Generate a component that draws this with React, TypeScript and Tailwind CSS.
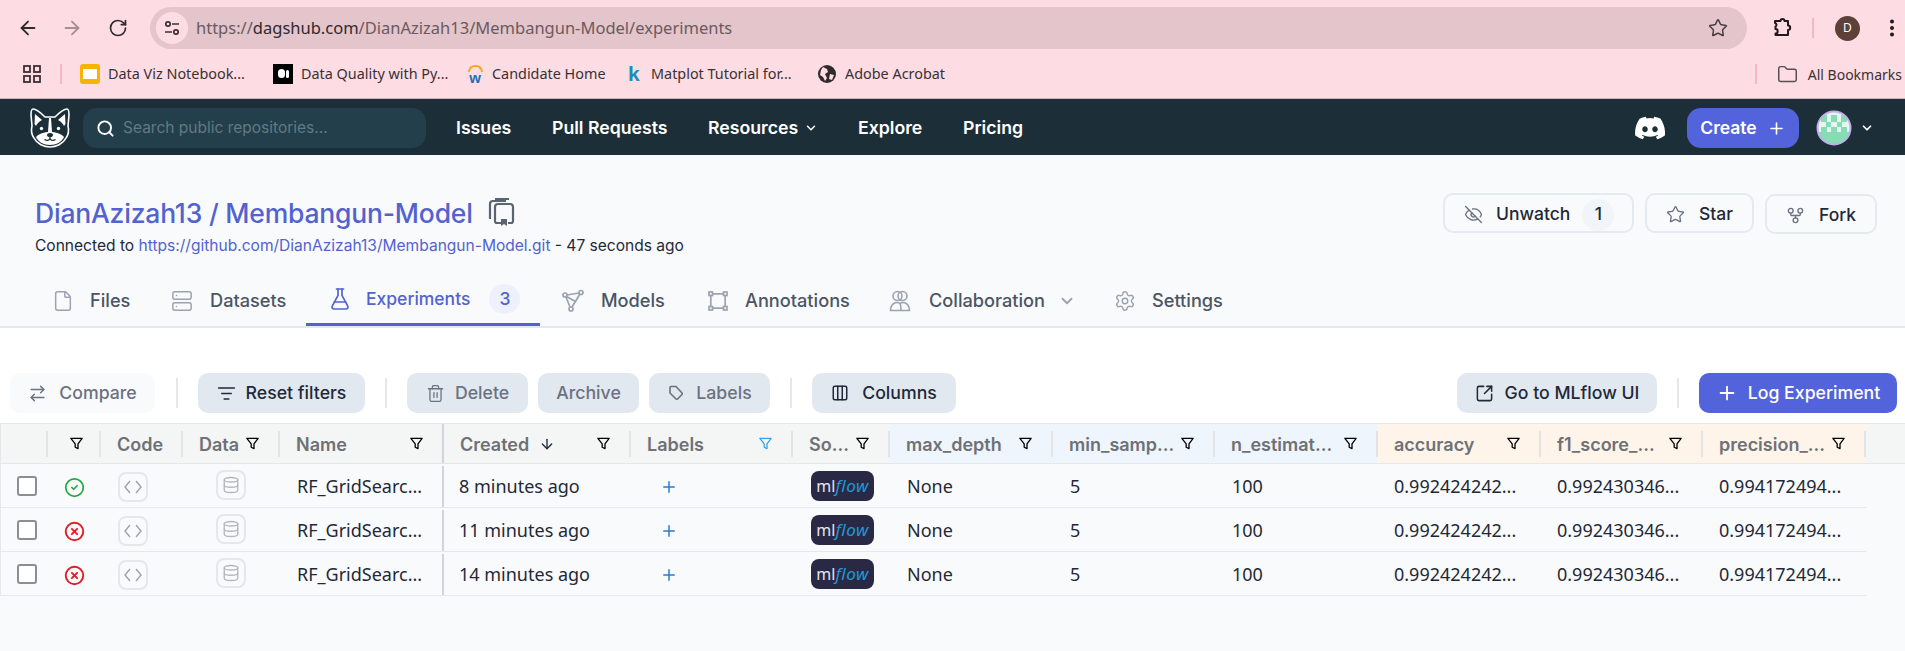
import React from 'react';
import {
  ArrowDown,
  ArrowLeft,
  ArrowRight,
  ArrowRightLeft,
  ChevronDown,
  CircleCheck,
  CircleX,
  Columns3,
  Database,
  EllipsisVertical,
  EyeOff,
  File,
  FlaskConical,
  Folder,
  GitFork,
  ListFilter,
  Plus,
  RotateCw,
  Search,
  Server,
  Settings,
  SquareArrowOutUpRight,
  Star,
  Trash2,
} from 'lucide-react';

const FunnelIcon = ({ className = 'text-black' }: { className?: string }) => (
  <svg viewBox="0 0 16 16" className={`h-[15px] w-[15px] shrink-0 ${className}`} fill="none" stroke="currentColor" strokeWidth="1.4" strokeLinejoin="round">
    <path d="M2 2.500h12L9.600 8.400v5L6.600 12V8.400z" />
  </svg>
);

const BulldogLogo = () => (
  <svg viewBox="0 0 44 44" className="h-[44px] w-[44px] shrink-0">
    <path d="M5 3C8 3 14 8 17 11H27C30 8 36 3 39 3C41 3 41 6 41 9L40 20C41 24 41 28 38 32C35 38 28 41 22 41C16 41 9 38 6 32C3 28 3 24 4 20L3 9C3 6 3 3 5 3Z" fill="#1c2f39" stroke="#fff" strokeWidth="1.600" strokeLinejoin="round" />
    <path d="M7 8L14 14C11 15.500 9 17.500 8 20L6.500 18ZM37 8L30 14C33 15.500 35 17.500 36 20L37.500 18Z" fill="#fff" />
    <path d="M21 12h2l1 14h-4z" fill="#fff" />
    <circle cx="13.500" cy="22.500" r="1.700" fill="#fff" />
    <circle cx="30.500" cy="22.500" r="1.700" fill="#fff" />
    <path d="M8 31C11 27.500 16 26 22 26C28 26 33 27.500 36 31C34 36 28 39 22 39C16 39 10 36 8 31Z" fill="#fff" />
    <ellipse cx="22" cy="29" rx="3" ry="2" fill="#1c2f39" />
    <path d="M22 31v1.500M16.500 33.500c2.500 1.500 4.500 1 5.500-1 1 2 3 2.500 5.500 1" fill="none" stroke="#1c2f39" strokeWidth="1.300" />
  </svg>
);

const DiscordIcon = () => (
  <svg viewBox="0 0 24 24" className="h-[30px] w-[30px]" fill="#fff">
    <path d="M20.300 4.400A19.800 19.800 0 0 0 15.400 3l-.6 1.300a18.300 18.300 0 0 0-5.500 0L8.600 3a19.700 19.700 0 0 0-4.900 1.500C.6 9.100-.3 13.600.2 18a19.900 19.900 0 0 0 6 3l1.300-2c-.7-.3-1.400-.6-2-1l.5-.4a14.200 14.200 0 0 0 12.100 0l.5.4c-.6.4-1.300.7-2 1l1.300 2a19.800 19.800 0 0 0 6-3c.6-5.100-.9-9.500-3.600-13.600zM8 15.300c-1.200 0-2.200-1.100-2.200-2.400S6.700 10.500 8 10.500s2.200 1.100 2.200 2.400-1 2.400-2.200 2.400zm8 0c-1.200 0-2.200-1.100-2.200-2.400s1-2.400 2.200-2.400 2.200 1.100 2.200 2.400-1 2.400-2.200 2.400z" />
  </svg>
);

const Identicon = () => (
  <svg viewBox="0 0 36 36" className="h-[36px] w-[36px] shrink-0">
    <clipPath id="avatar-clip"><circle cx="18" cy="18" r="16.500" /></clipPath>
    <g clipPath="url(#avatar-clip)">
      <rect width="36" height="36" fill="#e8f5ef" />
      <rect x="0" y="22" width="36" height="14" fill="#86dcb4" />
      <rect x="5" y="5" width="6" height="7" fill="#86dcb4" />
      <rect x="15" y="5" width="6" height="7" fill="#86dcb4" />
      <rect x="25" y="5" width="6" height="7" fill="#86dcb4" />
      <rect x="10" y="12" width="5" height="5" fill="#86dcb4" />
      <rect x="21" y="12" width="5" height="5" fill="#86dcb4" />
      <rect x="5" y="17" width="6" height="5" fill="#86dcb4" />
      <rect x="15" y="17" width="6" height="5" fill="#86dcb4" />
      <rect x="25" y="17" width="6" height="5" fill="#86dcb4" />
    </g>
    <circle cx="18" cy="18" r="16.500" fill="none" stroke="#c3aee8" strokeWidth="2" />
  </svg>
);

const TuneIcon = () => (
  <svg viewBox="0 0 20 20" className="h-5 w-5 text-[#3c3034]" fill="none" stroke="currentColor" strokeWidth="1.700">
    <circle cx="6" cy="6" r="2.200" />
    <path d="M10 6h7M3 14h7" />
    <circle cx="14" cy="14" r="2.200" />
  </svg>
);

const ExtensionIcon = () => (
  <svg viewBox="0 0 20 20" className="h-5 w-5 text-[#1f1b1c]" fill="none" stroke="currentColor" strokeWidth="2" strokeLinejoin="round">
    <path d="M3 3h5.500a2 2 0 0 1 4 0H16v4.500a2.200 2.200 0 0 1 0 4.400V17H3.500v-1.500a2.200 2.200 0 0 0 0-4.400V8.500a2 2 0 0 0 1-1.700C4.500 5.500 3 5 3 5z" />
  </svg>
);

const AppsIcon = () => (
  <svg viewBox="0 0 18 18" className="h-[18px] w-[18px] text-[#3c3034]" fill="none" stroke="currentColor" strokeWidth="1.800">
    <rect x="1" y="1" width="6" height="6" />
    <rect x="11" y="1" width="6" height="6" />
    <rect x="1" y="11" width="6" height="6" />
    <rect x="11" y="11" width="6" height="6" />
  </svg>
);

const TagIcon = () => (
  <svg viewBox="0 0 18 18" className="h-[18px] w-[18px]" fill="none" stroke="currentColor" strokeWidth="1.600" strokeLinejoin="round">
    <path d="M3 3.500c0-.5.400-1 1-1h5l6 6.500c.4.500.4 1 0 1.500l-4.500 4.500c-.5.400-1 .4-1.500 0L3 9z" />
  </svg>
);

const ModelsIcon = () => (
  <svg viewBox="0 0 24 24" className="h-6 w-6 text-[#9ca3af]" fill="none" stroke="currentColor" strokeWidth="1.700">
    <circle cx="4" cy="6" r="2" />
    <circle cx="20" cy="3.500" r="2" />
    <circle cx="10" cy="20" r="2" />
    <path d="M6 6l12-2M5 8l4 10M11 18l8-13M5.500 7.500l9 5 4-7" />
  </svg>
);

const AnnotationsIcon = () => (
  <svg viewBox="0 0 20 20" className="h-5 w-5 text-[#9ca3af]" fill="none" stroke="currentColor" strokeWidth="1.700">
    <rect x="1" y="1" width="3.500" height="3.500" />
    <rect x="15.500" y="1" width="3.500" height="3.500" />
    <rect x="1" y="15.500" width="3.500" height="3.500" />
    <rect x="15.500" y="15.500" width="3.500" height="3.500" />
    <path d="M4.500 2.800h11M4.500 17.200h11M2.800 4.500v11M17.200 4.500v11" />
  </svg>
);

const CollabIcon = () => (
  <svg viewBox="0 0 22 22" className="h-[22px] w-[22px] text-[#9ca3af]" fill="none" stroke="currentColor" strokeWidth="1.600">
    <circle cx="8.500" cy="6" r="4.500" />
    <circle cx="13.500" cy="6" r="4.500" />
    <path d="M1.500 20.500c0-5 3-8 6.500-8s4 2 4 8zM12 20.500h8.500c0-5-3-8-6.500-8-1 0-2 .3-3 1" />
  </svg>
);

const RepoCopyIcon = () => (
  <svg viewBox="0 0 28 30" className="h-[30px] w-[28px] text-[#5b6470]" fill="none" stroke="currentColor" strokeWidth="2.200">
    <path d="M8 2h14M3 22V7c0-2 1-3 3-3h13" />
    <path d="M8 24V10c0-2 1-3 3-3h12c2 0 3 1 3 3v14c0 1-1 2-2 2h-3M14 26H10c-1 0-2-1-2-2" />
    <path d="M14 22h6v7l-3-2-3 2z" fill="currentColor" stroke="none" />
  </svg>
);

const MlflowBadge = () => (
  <div className="-mt-[2px] flex h-[30px] w-[63px] items-center justify-center rounded-lg bg-[#2a2945] font-['Noto_Sans',sans-serif] leading-none">
    <span className="text-[16px] text-[#e5e7eb]">ml</span>
    <span className="text-[17px] italic tracking-[0.5px] text-[#1f9ad6]">flow</span>
  </div>
);

const ToolbarButton = ({ icon, label, className }: { icon?: React.ReactNode; label: string; className: string }) => (
  <button className={`flex h-10 items-center justify-center rounded-[10px] text-[17.700px] font-medium ${className}`}>
    {icon}
    <span>{label}</span>
  </button>
);

const Separator = () => <div className="mx-[20px] mb-[5px] h-[30px] w-[2px] bg-[#e5e7eb]" />;

const Bookmark = ({ icon, label, className }: { icon: React.ReactNode; label: string; className: string }) => (
  <div className={`flex items-center ${className}`}>
    {icon}
    <span className="whitespace-nowrap">{label}</span>
  </div>
);

const headerCols = [
  { label: '', bg: 'bg-[#f4f5f5]' },
  { label: '', filter: true, center: true, bg: 'bg-[#f4f5f5]' },
  { label: 'Code', bg: 'bg-[#f4f5f5]' },
  { label: 'Data', filter: true, bg: 'bg-[#f4f5f5]' },
  { label: 'Name', filter: true, bg: 'bg-[#f4f5f5]', strong: true },
  { label: 'Created', sort: true, filter: true, bg: 'bg-[#f4f5f5]' },
  { label: 'Labels', filter: true, blue: true, bg: 'bg-[#f4f5f5]' },
  { label: 'So...', filter: true, bg: 'bg-[#f4f5f5]' },
  { label: 'max_depth', filter: true, bg: 'bg-[#eef5fd]' },
  { label: 'min_samp...', filter: true, bg: 'bg-[#eef5fd]' },
  { label: 'n_estimat...', filter: true, bg: 'bg-[#eef5fd]' },
  { label: 'accuracy', filter: true, bg: 'bg-[#fef4ea]' },
  { label: 'f1_score_...', filter: true, bg: 'bg-[#fef4ea]' },
  { label: 'precision_...', filter: true, bg: 'bg-[#fef4ea]' },
];

const rows = [
  { ok: true, created: '8 minutes ago' },
  { ok: false, created: '11 minutes ago' },
  { ok: false, created: '14 minutes ago' },
];

export default function App() {
  return (
    <div className="h-[651px] w-[1905px] overflow-hidden bg-[#f9fafb] font-['Inter',sans-serif]">
      {/* Browser chrome */}
      <div className="h-[99px] border-b border-[#c9b5ba] bg-[#fddde3] font-['Noto_Sans',sans-serif]">
        <div className="flex h-[50px] items-center pt-[6px]">
          <ArrowLeft className="ml-[17px] h-[22px] w-[22px] text-[#2f2a2c]" strokeWidth={2} />
          <ArrowRight className="ml-[22px] h-[22px] w-[22px] text-[#a58e94]" strokeWidth={2} />
          <RotateCw className="ml-[25px] h-5 w-5 text-[#2f2a2c]" strokeWidth={2} />
          <div className="ml-[22px] flex h-[42px] w-[1597px] items-center rounded-full bg-[#e3c5cb] pl-[6px] pr-[19px]">
            <div className="flex h-8 w-8 items-center justify-center rounded-full bg-[#fddde3]">
              <TuneIcon />
            </div>
            <div className="ml-[8px] flex-1 text-[16.500px] text-[#6b5a5f]">
              https://<span className="text-[#2f2a2c]">dagshub.com</span>/DianAzizah13/Membangun-Model/experiments
            </div>
            <Star className="h-5 w-5 text-[#4a3f42]" strokeWidth={1.800} />
          </div>
          <div className="ml-[25px]"><ExtensionIcon /></div>
          <div className="ml-[20px] h-5 w-[2px] bg-[#f6b6c6]" />
          <div className="ml-[21px] flex h-[25px] w-[25px] items-center justify-center rounded-full bg-[#5d4037] text-[12px] text-white">D</div>
          <EllipsisVertical className="ml-[21px] h-[22px] w-[22px] text-[#1f1b1c]" strokeWidth={2.400} />
        </div>
        <div className="flex h-[48px] items-center text-[14.400px] text-[#3a3033]">
          <div className="ml-[23px]"><AppsIcon /></div>
          <div className="ml-[19px] h-[20px] w-[2px] bg-[#f6b6c6]" />
          <Bookmark
            className="ml-[18px] w-[193px] gap-[8px]"
            label="Data Viz Notebook..."
            icon={<span className="flex h-5 w-5 items-center justify-center rounded-[3px] bg-[#f4b400]"><span className="h-[10px] w-[14px] bg-white" /></span>}
          />
          <Bookmark
            className="w-[193px] gap-[8px]"
            label="Data Quality with Py..."
            icon={<span className="flex h-5 w-5 items-center justify-center gap-px bg-black"><span className="h-[9px] w-[7px] rounded-full bg-white" /><span className="h-[8px] w-[3px] rounded-full bg-white" /></span>}
          />
          <Bookmark
            className="w-[162px] gap-[8px]"
            label="Candidate Home"
            icon={<span className="flex h-5 w-[18px] flex-col items-center justify-center font-['Liberation_Sans',sans-serif] text-[15px] font-bold leading-[11px]"><span className="h-[7px] w-[15px] rounded-t-full border-2 border-b-0 border-[#f4a81c]" /><span className="text-[#1a6fb5]">w</span></span>}
          />
          <Bookmark
            className="w-[190px] gap-[10px]"
            label="Matplot Tutorial for..."
            icon={<span className="w-[13px] font-['Liberation_Sans',sans-serif] text-[21px] font-bold leading-none text-[#1a8cc0]">k</span>}
          />
          <Bookmark
            className="gap-[9px]"
            label="Adobe Acrobat"
            icon={<svg viewBox="0 0 18 18" className="h-[18px] w-[18px]"><circle cx="9" cy="9" r="9" fill="#2f2a2c" /><path d="M5 2l4 2 1 3-3 2 2 4-2 3-2-4-3-2 1-5zM12 9l4 1-2 5-3-1z" fill="#fddde3" /></svg>}
          />
          <div className="ml-auto flex items-center text-[14px]">
            <div className="h-[20px] w-[2px] bg-[#f6b6c6]" />
            <Folder className="ml-[20px] h-[21px] w-[21px] text-[#5a4d51]" strokeWidth={1.700} />
            <span className="ml-[10px] mr-[3px] whitespace-nowrap">All Bookmarks</span>
          </div>
        </div>
      </div>

      {/* DagsHub nav */}
      <div className="flex h-[56px] items-center bg-[#1c2f39] pt-[2px] text-white">
        <div className="ml-[28px]"><BulldogLogo /></div>
        <div className="ml-[11px] flex h-10 w-[343px] items-center gap-[8px] rounded-[14px] bg-[#243f4c] pl-[13px] text-[15.500px] text-[#627983]">
          <Search className="h-[19px] w-[19px] text-white" strokeWidth={2.400} />
          <span>Search public repositories...</span>
        </div>
        <nav className="ml-[30px] flex items-center text-[17.700px] font-semibold">
          <span className="w-[96px]">Issues</span>
          <span className="w-[156px]">Pull Requests</span>
          <span className="flex w-[150px] items-center gap-[6px]">Resources <ChevronDown className="h-[14px] w-[14px]" strokeWidth={2.500} /></span>
          <span className="w-[105px]">Explore</span>
          <span>Pricing</span>
        </nav>
        <div className="ml-auto flex items-center">
          <DiscordIcon />
          <button className="ml-[22px] flex h-10 w-[112px] items-center justify-center gap-[10px] rounded-[14px] bg-[#5263dc] text-[17.500px] font-semibold">
            Create <Plus className="h-[19px] w-[19px]" strokeWidth={2} />
          </button>
          <div className="ml-[17px]"><Identicon /></div>
          <ChevronDown className="ml-[8px] mr-[31px] h-[14px] w-[14px]" strokeWidth={3} />
        </div>
      </div>

      {/* Repo header */}
      <div className="h-[173px] border-b-2 border-[#e5e7eb] bg-[#f9fafc]">
        <div className="flex h-[110px] items-start justify-between pl-[35px] pr-[28px] pt-[38px]">
          <div>
            <div className="flex items-center gap-[14px]">
              <span className="text-[26.500px] font-medium leading-[40px] tracking-[-0.2px] text-[#5263cf]">DianAzizah13 / Membangun-Model</span>
              <div className="-mt-[2px]"><RepoCopyIcon /></div>
            </div>
            <div className="mt-[3px] text-[15.550px] leading-[20px] text-[#1f2937]">
              Connected to <span className="text-[#5263cf]">https://github.com/DianAzizah13/Membangun-Model.git</span> - 47 seconds ago
            </div>
          </div>
          <div className="flex items-start gap-[11px] text-[17.500px] font-medium text-[#1f2937]">
            <button className="flex h-10 w-[191px] items-center rounded-[10px] border-2 border-[#e5e9f0] pl-[19px] pt-[3px]">
              <EyeOff className="h-[19px] w-[19px] text-[#6b7280]" strokeWidth={1.700} />
              <span className="ml-[13px]">Unwatch</span>
              <span className="ml-[12px] flex h-8 w-8 items-center justify-center rounded-full bg-[#f1f4f8]">1</span>
            </button>
            <button className="flex h-10 w-[109px] items-center justify-center gap-[14px] rounded-[10px] border-2 border-[#e5e9f0] pt-[3px]">
              <Star className="h-[19px] w-[19px] text-[#6b7280]" strokeWidth={1.700} />
              Star
            </button>
            <button className="mt-px flex h-10 w-[112px] items-center justify-center gap-[14px] rounded-[10px] border-2 border-[#e5e9f0] pt-[3px]">
              <GitFork className="h-[19px] w-[19px] text-[#6b7280]" strokeWidth={1.700} />
              Fork
            </button>
          </div>
        </div>
        <div className="flex h-[61px] items-stretch text-[18.200px] font-medium text-[#4b5563]">
          <div className="ml-[52px] flex w-[119px] items-center gap-[16px] pt-[10px]">
            <File className="h-[22px] w-[22px] text-[#9ca3af]" strokeWidth={1.600} />
            <span>Files</span>
          </div>
          <div className="flex w-[135px] items-center gap-[17px] pt-[10px]">
            <Server className="h-[22px] w-[22px] text-[#9ca3af]" strokeWidth={1.600} />
            <span>Datasets</span>
          </div>
          <div className="flex w-[234px] items-center border-b-[3px] border-[#5263cf] pl-[22px] pt-[10px] text-[17.500px] text-[#5263cf]">
            <FlaskConical className="h-[24px] w-[24px]" strokeWidth={1.700} />
            <span className="ml-[14px]">Experiments</span>
            <span className="ml-[19px] flex h-[30px] w-[31px] items-center justify-center rounded-full bg-[#eef0fb]">3</span>
          </div>
          <div className="ml-[21px] flex w-[147px] items-center gap-[16px] pt-[10px]">
            <ModelsIcon />
            <span>Models</span>
          </div>
          <div className="flex w-[181px] items-center gap-[17px] pt-[10px]">
            <AnnotationsIcon />
            <span>Annotations</span>
          </div>
          <div className="flex w-[225px] items-center pt-[10px]">
            <CollabIcon />
            <span className="ml-[18px]">Collaboration</span>
            <ChevronDown className="ml-[13px] h-[18px] w-[18px] text-[#9ca3af]" strokeWidth={2.500} />
          </div>
          <div className="flex items-center gap-[16px] pt-[10px]">
            <Settings className="h-[22px] w-[22px] text-[#9ca3af]" strokeWidth={1.600} />
            <span>Settings</span>
          </div>
        </div>
      </div>

      {/* Toolbar */}
      <div className="flex h-[95px] items-end justify-between bg-white pb-[10px] pl-[10px] pr-[8px]">
        <div className="flex items-end">
          <ToolbarButton className="mr-px w-[145px] gap-[12px] bg-[#f9fafb] text-[#6b7280]" label="Compare" icon={<ArrowRightLeft className="h-[19px] w-[19px]" strokeWidth={1.800} />} />
          <Separator />
          <ToolbarButton className="w-[167px] gap-[10px] bg-[#e2e8f0] text-[#1f2937]" label="Reset filters" icon={<ListFilter className="h-[19px] w-[19px]" strokeWidth={1.800} />} />
          <Separator />
          <div className="flex gap-[10px]">
            <ToolbarButton className="w-[121px] gap-[10px] bg-[#e2e8f0] text-[#6b7280]" label="Delete" icon={<Trash2 className="h-[19px] w-[19px]" strokeWidth={1.600} />} />
            <ToolbarButton className="w-[101px] bg-[#e2e8f0] text-[#6b7280]" label="Archive" />
            <ToolbarButton className="w-[121px] gap-[11px] bg-[#e2e8f0] text-[#6b7280]" label="Labels" icon={<TagIcon />} />
          </div>
          <Separator />
          <ToolbarButton className="w-[144px] gap-[13px] bg-[#e2e8f0] text-[#1f2937]" label="Columns" icon={<Columns3 className="h-[18px] w-[18px]" strokeWidth={2} />} />
        </div>
        <div className="flex items-end">
          <ToolbarButton className="w-[200px] gap-[11px] bg-[#e2e8f0] text-[#1f2937]" label="Go to MLflow UI" icon={<SquareArrowOutUpRight className="h-[19px] w-[19px]" strokeWidth={1.900} />} />
          <Separator />
          <ToolbarButton className="w-[198px] gap-[10px] bg-[#5263dc] text-white" label="Log Experiment" icon={<Plus className="h-[22px] w-[22px]" strokeWidth={2} />} />
        </div>
      </div>

      {/* Experiments table */}
      <div className="border-l border-t border-[#e5e7eb]">
        <div className="grid h-[40px] grid-cols-[47px_53px_82px_97px_164px_187px_162px_97px_163px_162px_163px_163px_162px_163px_1fr] border-b border-[#e5e7eb] bg-[#f4f5f5] text-[18px] font-semibold text-[#6e7175]">
          {headerCols.map((col, i) => (
            <div key={i} className={`flex items-center ${col.bg} ${col.strong ? 'border-r-2 border-[#d1d5db]' : ''}`}>
              <div className={`flex h-[26px] w-full items-center justify-between pr-[18px] ${col.strong ? '' : 'border-r-2 border-[#e2e4e7]'} ${col.center ? 'pl-[21px]' : 'pl-[16px]'}`}>
                <span className="flex items-center gap-[10px] whitespace-nowrap pt-px">
                  {col.label}
                  {col.sort && <ArrowDown className="h-4 w-4 text-[#1f2937]" strokeWidth={2} />}
                </span>
                {col.filter && <FunnelIcon className={col.blue ? 'text-[#38a3e8]' : 'text-black'} />}
              </div>
            </div>
          ))}
        </div>
        {rows.map(row => (
          <div
            key={row.created}
            className="grid h-[44px] w-[1865px] grid-cols-[47px_53px_82px_97px_164px_187px_162px_97px_163px_162px_163px_163px_162px_163px] items-center border-b border-[#e5e7eb] pt-[2px] font-['Noto_Sans',sans-serif] text-[18px] text-[#1f2937]"
          >
            <div className="pl-[16px]">
              <div className="-mt-[2px] h-5 w-5 rounded-[3px] border-2 border-[#8a8f96] bg-white" />
            </div>
            <div className="pl-[16px]">
              <div className="mt-[2px]">
                {row.ok ? (
                  <CircleCheck className="h-[21px] w-[21px] text-[#22a845]" strokeWidth={2} />
                ) : (
                  <CircleX className="h-[21px] w-[21px] text-[#dc1f26]" strokeWidth={2.200} />
                )}
              </div>
            </div>
            <div className="pl-[17px]">
              <div className="mt-px flex h-[30px] w-[30px] items-center justify-center rounded-lg border-2 border-[#e4e7ec] text-[#9ca3af]">
                <svg viewBox="0 0 18 14" className="h-[14px] w-[18px]" fill="none" stroke="currentColor" strokeWidth="1.400"><path d="M6 1L1 7l5 6M12 1l5 6-5 6" /></svg>
              </div>
            </div>
            <div className="pl-[33px]">
              <div className="-mt-[3px] flex h-[30px] w-[30px] items-center justify-center rounded-lg border-2 border-[#e4e7ec]">
                <Database className="h-[18px] w-[18px] text-[#b4b8be]" strokeWidth={1.800} />
              </div>
            </div>
            <div className="flex h-full items-center border-r-2 border-[#d1d5db] pl-[17px]">
              <span className="whitespace-nowrap">RF_GridSearc...</span>
            </div>
            <div className="pl-[15px]"><span className="block whitespace-nowrap">{row.created}</span></div>
            <div className="pl-[29px]"><Plus className="h-[18px] w-[18px] text-[#2b7bd0]" strokeWidth={2} /></div>
            <div className="pl-[18px]"><MlflowBadge /></div>
            {['None', '5', '100'].map(value => (
              <div key={value} className="pl-[17px]">{value}</div>
            ))}
            {['0.992424242...', '0.992430346...', '0.994172494...'].map(value => (
              <div key={value} className="whitespace-nowrap pl-[16px]">{value}</div>
            ))}
          </div>
        ))}
      </div>
    </div>
  );
}
